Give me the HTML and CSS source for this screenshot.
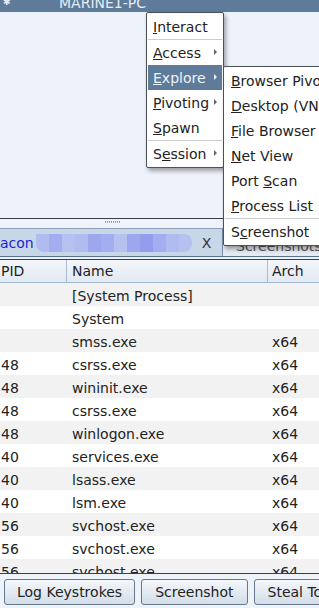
FILE: index.html
```html
<!DOCTYPE html>
<html lang="en">
<head>
  <meta charset="UTF-8">
  <meta name="viewport" content="width=device-width, initial-scale=1">
  <title>MARINE1-PC</title>
  <link rel="stylesheet" href="styles.css">
</head>
<body>

  <div class="titlebar">
    <span class="titlebar-icon">✱</span>
    <span class="titlebar-text">MARINE1-PC</span>
  </div>

  <div class="desktop"></div>

  <div class="splitter"><span class="grip"></span></div>

  <div class="tabs">
    <div class="tab active">
      <span class="tab-name">acon</span>
      <span class="blur">
        <i class="b1"></i><i class="b2"></i><i class="b3"></i><i class="b1"></i><i class="b4"></i><i class="b2"></i><i class="b3"></i><i class="b4"></i><i class="b5"></i><i class="b2"></i><i class="b1"></i><i class="b3"></i>
      </span>
      <span class="tab-close">X</span>
    </div>
    <div class="tab">Screenshots</div>
  </div>

  <div class="table">
    <div class="row head">
      <div class="cell">PID</div>
      <div class="cell">Name</div>
      <div class="cell">Arch</div>
    </div>
    <div class="row"><div class="cell"></div><div class="cell">[System Process]</div><div class="cell"></div></div>
    <div class="row"><div class="cell"></div><div class="cell">System</div><div class="cell"></div></div>
    <div class="row"><div class="cell"></div><div class="cell">smss.exe</div><div class="cell">x64</div></div>
    <div class="row"><div class="cell">48</div><div class="cell">csrss.exe</div><div class="cell">x64</div></div>
    <div class="row"><div class="cell">48</div><div class="cell">wininit.exe</div><div class="cell">x64</div></div>
    <div class="row"><div class="cell">48</div><div class="cell">csrss.exe</div><div class="cell">x64</div></div>
    <div class="row"><div class="cell">48</div><div class="cell">winlogon.exe</div><div class="cell">x64</div></div>
    <div class="row"><div class="cell">40</div><div class="cell">services.exe</div><div class="cell">x64</div></div>
    <div class="row"><div class="cell">40</div><div class="cell">lsass.exe</div><div class="cell">x64</div></div>
    <div class="row"><div class="cell">40</div><div class="cell">lsm.exe</div><div class="cell">x64</div></div>
    <div class="row"><div class="cell">56</div><div class="cell">svchost.exe</div><div class="cell">x64</div></div>
    <div class="row"><div class="cell">56</div><div class="cell">svchost.exe</div><div class="cell">x64</div></div>
    <div class="row"><div class="cell">56</div><div class="cell">svchost.exe</div><div class="cell">x64</div></div>
  </div>

  <div class="buttons">
    <button>Log Keystrokes</button>
    <button>Screenshot</button>
    <button>Steal Token</button>
  </div>

  <!-- popup menus -->
  <div class="menu main-menu">
    <div class="item"><u>I</u>nteract</div>
    <div class="sep"></div>
    <div class="item sub"><u>A</u>ccess</div>
    <div class="item sub selected"><u>E</u>xplore</div>
    <div class="item sub"><u>P</u>ivoting</div>
    <div class="item"><u>S</u>pawn</div>
    <div class="sep"></div>
    <div class="item sub">S<u>e</u>ssion</div>
  </div>

  <div class="menu sub-menu">
    <div class="item"><u>B</u>rowser Pivot</div>
    <div class="item"><u>D</u>esktop (VNC)</div>
    <div class="item"><u>F</u>ile Browser</div>
    <div class="item"><u>N</u>et View</div>
    <div class="item">Port <u>S</u>can</div>
    <div class="item"><u>P</u>rocess List</div>
    <div class="sep"></div>
    <div class="item">S<u>c</u>reenshot</div>
  </div>

</body>
</html>
```

FILE: styles.css
```css
* {
  box-sizing: border-box;
  margin: 0;
  padding: 0;
}
html, body {
  height: 100%;
}
body {
  font-family: 'DejaVu Sans', sans-serif;
  font-size: 14px;
  color: #222;
  background: #eef2fa;
  display: flex;
  flex-direction: column;
  overflow: hidden;
  position: relative;
}
.titlebar {
  height: 12px;
  flex: none;
  background: #5e7b9a;
  color: #e6edf5;
  font-size: 14px;
  line-height: 7px;
  overflow: hidden;
  display: flex;
  white-space: nowrap;
}
.titlebar-icon {
  font-size: 9px;
  line-height: 4px;
  padding-left: 3px;
  width: 59px;
}
.desktop {
  height: 207px;
  flex: none;
  background: #eef2fa;
  border-bottom: 1px solid #3a3f46;
}
.splitter {
  height: 10px;
  flex: none;
  background: #eef2fa;
  border-bottom: 1px solid #8da2ba;
  padding: 2px 0 0 105px;
}
.grip {
  display: block;
  width: 15px;
  height: 2px;
  border-top: 1px dotted #7f93ad;
  border-bottom: 1px dotted #9fb0c5;
}
.tabs {
  height: 28px;
  flex: none;
  display: flex;
  border-bottom: 1px solid #59708c;
  margin-bottom: 2px;
}
.tab {
  display: flex;
  align-items: center;
  background: #e4eaf2;
  color: #555;
  padding: 6px 0 0 13px;
  flex: 1;
  white-space: nowrap;
}
.tab.active {
  flex: none;
  width: 223px;
  background: #c8d7e7;
  border-right: 1px solid #7a8ea6;
  padding: 1px 0 0 0;
  color: #222;
}
.tab-name {
  color: #1c1ed6;
}
.blur {
  display: flex;
  height: 18px;
  margin-left: 2px;
  border-radius: 0 8px 8px 8px;
  overflow: hidden;
}
.blur i {
  display: block;
  width: 13px;
  height: 100%;
}
.b1 { background: #b0bbf0; }
.b2 { background: #a3aef0; }
.b3 { background: #b7c1ef; }
.b4 { background: #9ca7ee; }
.b5 { background: #929eec; }
.tab-close {
  margin-left: 10px;
  color: #333;
}
.table {
  flex: none;
  height: 315px;
  border-top: 1px solid #3b4048;
  border-bottom: 1px solid #3b4048;
  background: #fff;
  overflow: hidden;
}
.row {
  display: grid;
  grid-template-columns: 67px 201px 1fr;
  height: 23px;
  padding-top: 2px;
  line-height: 22px;
  white-space: nowrap;
}
.row:nth-child(even) {
  background: #f2f2f2;
}
.row .cell {
  padding-left: 5px;
  overflow: hidden;
}
.row .cell:first-child {
  padding-left: 1px;
}
.row .cell:last-child {
  padding-left: 4px;
}
.row.head {
  padding-top: 0;
  line-height: 23px;
  background: linear-gradient(#f4f7fb, #e2e9f1);
  border-bottom: 1px solid #a3b7cd;
}
.row.head .cell {
  border-right: 1px solid #a9bdd3;
}
.row.head .cell:last-child {
  border-right: none;
}
.buttons {
  flex: 1;
  display: flex;
  gap: 6px;
  padding: 5px 0 0 4px;
  background: #eef2f9;
  white-space: nowrap;
}
button {
  flex: none;
  height: 26px;
  padding: 0 12px;
  font-family: 'DejaVu Sans', sans-serif;
  font-size: 14px;
  color: #222;
  border: 1px solid #66788d;
  border-radius: 3px;
  background: linear-gradient(#f4f7fa, #d3dde8);
}
button + button {
  padding: 0 13px;
}

/* popup menus */
.menu {
  position: absolute;
  background: #fff;
  border: 1px solid #4c5158;
  border-radius: 2px;
  padding: 1px;
  box-shadow: 2px 3px 4px rgba(0, 0, 0, 0.35);
  white-space: nowrap;
}
.main-menu {
  left: 146px;
  top: 12px;
  width: 78px;
}
.sub-menu {
  left: 223px;
  top: 66px;
  width: 120px;
}
.item {
  height: 25px;
  padding: 1px 0 0 5px;
  line-height: 24px;
  position: relative;
}
.sub-menu .item {
  padding-left: 6px;
}
.item.sub::after {
  content: "";
  position: absolute;
  right: 5px;
  top: 9px;
  border-left: 3.5px solid #666;
  border-top: 3.5px solid transparent;
  border-bottom: 3.5px solid transparent;
}
.item.selected {
  background: #5e7b9a;
  color: #eef3f8;
}
.item.selected::after {
  border-left-color: #e8eef5;
}
.sep {
  height: 1px;
  background: #c9cdd2;
}
```
